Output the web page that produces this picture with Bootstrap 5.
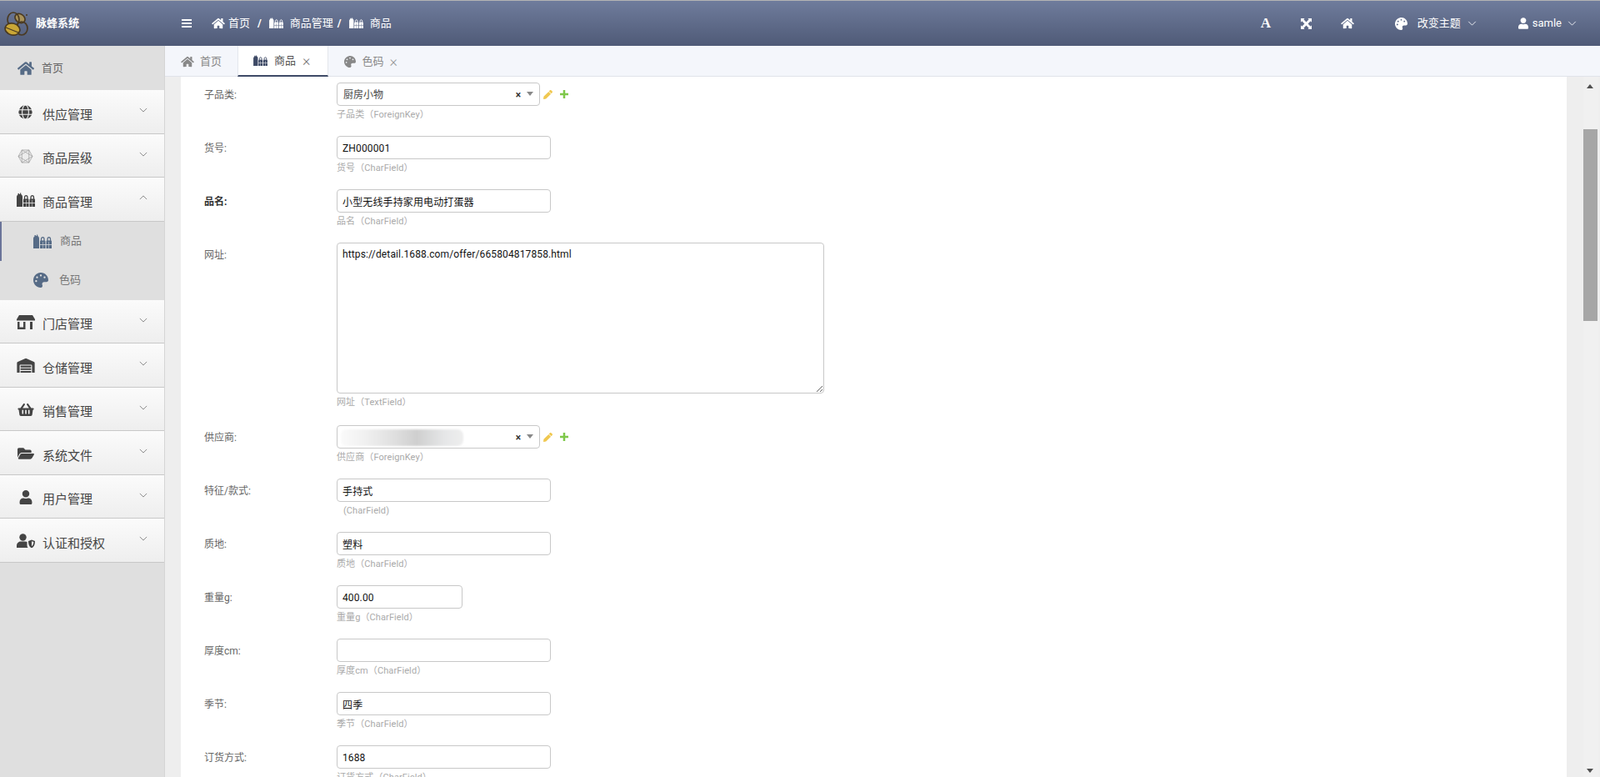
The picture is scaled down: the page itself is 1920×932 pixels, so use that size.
<!doctype html>
<html lang="zh"><head><meta charset="utf-8"><title>脉蜂系统</title>
<link href="https://cdn.jsdelivr.net/npm/bootstrap@5.3.0/dist/css/bootstrap.min.css" rel="stylesheet">
<style>
html,body{height:932px;overflow:hidden}
body{font-family:Roboto,"Noto Sans CJK SC",sans-serif;font-size:13px;color:#555;background:#eee}
.ic{fill:currentColor;display:inline-block;flex:none}
.topbar{height:55px;border-top:1px solid #b4b4b4;background:linear-gradient(#6f7c9c,#4f5a77);color:#fff}
.brand{width:198px;padding-left:5px}
.brand b{font-size:13px;margin-left:9px;font-weight:700}
.crumb{gap:4px;font-size:13px;margin-left:24px;margin-top:-1px}
.crumb i{font-style:normal;font-weight:700;margin:0 5px}
.crumb i.tight{margin-left:1px}
.tools{padding-right:28px}
.letter{font:700 17px "Liberation Serif",serif;width:12px}
.side{width:198px;background:#dfdfdf;border-right:1px solid #d5d5d5;flex:none}
.side-home{height:53px;color:#666;padding-left:21px;gap:9px;padding-top:1px}
.side-home svg{color:#566b86}
.side-item{height:52.5px;background:linear-gradient(#fbfbfb,#eeeeee);border-bottom:1px solid #c8c8c8;color:#444;font-size:15px;padding:8px 20px 0 19px}
.side-item .lab{margin-left:9px}
.side-item .ico{width:23px;display:flex;justify-content:center;margin-top:-6px}
.chev{margin-left:auto;margin-top:-11px;color:#777}
.sub{height:47px;padding-left:40px;gap:10px;color:#777}
.sub svg{color:#566b86}
.sub.on{border-left:2px solid #6b7499;padding-left:38px}
.sublab{margin-left:3px}
.tabs{height:37px;background:#f4f6fb;border-bottom:1px solid #e0e3ea;font-size:13px;color:#888}
.tabx{height:36px;padding:1px 19px 0;gap:7px}
.tabx.on{background:#fff;color:#555;border-bottom:2px solid #3e4a66;border-left:1px solid #e4e6ec;border-right:1px solid #e4e6ec;height:37px;padding:0 21px 0 18px}
.tabx.on .cl{color:#777;margin-left:1px}
.cl{font-size:18px;font-weight:300;color:#999;line-height:1}
.sheet{margin-left:19px;margin-right:40px;background:#fff;padding:7px 0 0 28px;height:840px;overflow:hidden}
.fld{height:64px;display:flex}
.fld.tall{height:219px}
.flab{width:159px;font-size:12px;color:#666;line-height:30px}
.flab.req{color:#333;font-weight:700}
.fhelp{font-size:11px;color:#aaa;line-height:14px;margin-top:4px;white-space:pre;letter-spacing:.1px}
.finp.form-control{width:257px;height:28px;min-height:0;border:1px solid #c8c8c8;border-radius:4px;padding:1px 6px 0;font-size:12px;letter-spacing:.13px;color:#111;box-shadow:none;font-family:inherit}
.finp.narrow{width:151px}
textarea.finp.form-control{width:585px;height:181px;padding:6px 6px;line-height:15px}
.fsel{width:244px;height:28px;border:1px solid #c8c8c8;border-radius:4px;font-size:12px;color:#444;padding:1px 7px 0;position:relative;background:#fff}
.clr{margin-left:auto;font-weight:700;color:#333;font-size:12px;line-height:1}
.car{width:0;height:0;border:4px solid transparent;border-top:5px solid #888;border-bottom:0;margin:-2px 0 0 7px}
.smudge{position:absolute;left:4px;top:4px;width:147px;height:20px;border-radius:7px;background:linear-gradient(90deg,#fafafa,#f0f0f0 20%,#dedede 45%,#cfcfcf 62%,#e6e7e8 85%,#eeeeee);filter:blur(1.2px)}
.acts{gap:9px;margin-left:4px;height:28px}
.track{position:absolute;top:92px;right:2px;bottom:0;width:18px;background:#f0f0f0}
.thumb{position:absolute;top:63px;left:0;right:1px;height:230px;background:#a6a6a6}
.ua,.da{position:absolute;left:4px;width:0;height:0;border:4.5px solid transparent}
.ua{top:9px;border-bottom:5px solid #505050;border-top:0}
.da{bottom:5px;border-top:5px solid #505050;border-bottom:0}
</style></head>
<body>
<svg width="0" height="0" class="position-absolute">
<symbol id="home" viewBox="0 0 576 512"><path d="M280.37 148.26L96 300.11V464a16 16 0 0 0 16 16l112.06-.29a16 16 0 0 0 15.92-16V368a16 16 0 0 1 16-16h64a16 16 0 0 1 16 16v95.64a16 16 0 0 0 16 16.05L464 480a16 16 0 0 0 16-16V300L295.67 148.26a12.19 12.19 0 0 0-15.3 0zM571.6 251.47L488 182.56V44.05a12 12 0 0 0-12-12h-56a12 12 0 0 0-12 12v72.61L318.47 43a48 48 0 0 0-61 0L4.34 251.47a12 12 0 0 0-1.6 16.9l25.5 31A12 12 0 0 0 45.15 301l235.22-193.74a12.19 12.19 0 0 1 15.3 0L530.9 301a12 12 0 0 0 16.9-1.6l25.5-31a12 12 0 0 0-1.7-16.93z"/></symbol>
<symbol id="pal" viewBox="0 0 512 512"><path d="M204.3 5C104.9 24.4 24.8 104.3 5.2 203.4c-37 187 131.7 326.4 258.8 306.7 41.2-6.4 61.4-54.6 42.5-91.7-23.1-45.4 9.9-98.4 60.9-98.4h79.7c35.8 0 64.8-29.6 64.9-65.3C511.5 97.1 368.1-26.9 204.3 5zM96 320c-17.7 0-32-14.3-32-32s14.3-32 32-32 32 14.3 32 32-14.3 32-32 32zm32-128c-17.7 0-32-14.3-32-32s14.3-32 32-32 32 14.3 32 32-14.3 32-32 32zm128-64c-17.7 0-32-14.3-32-32s14.3-32 32-32 32 14.3 32 32-14.3 32-32 32zm128 64c-17.7 0-32-14.3-32-32s14.3-32 32-32 32 14.3 32 32-14.3 32-32 32z"/></symbol>
<symbol id="user" viewBox="0 0 448 512"><path d="M224 256c70.7 0 128-57.3 128-128S294.7 0 224 0 96 57.3 96 128s57.3 128 128 128zm89.6 32h-16.7c-22.2 10.2-46.9 16-72.9 16s-50.6-5.8-72.9-16h-16.7C60.2 288 0 348.2 0 422.4V464c0 26.5 21.5 48 48 48h352c26.5 0 48-21.5 48-48v-41.6c0-74.2-60.2-134.4-134.4-134.4z"/></symbol>
<symbol id="open" viewBox="0 0 576 512"><path d="M572.694 292.093L500.27 416.248A63.997 63.997 0 0 1 444.989 448H45.025c-18.523 0-30.064-20.093-20.731-36.093l72.424-124.155A64 64 0 0 1 152 256h399.964c18.523 0 30.064 20.093 20.73 36.093zM152 224h328v-48c0-26.51-21.49-48-48-48H272l-64-64H48C21.49 64 0 85.49 0 112v278.046l69.077-118.418C86.214 242.25 117.989 224 152 224z"/></symbol>
<symbol id="basket" viewBox="0 0 576 512"><path d="M576 216v16c0 13.255-10.745 24-24 24h-8l-26.113 182.788C514.509 462.435 494.257 480 470.37 480H105.63c-23.887 0-44.139-17.565-47.518-41.212L32 256h-8c-13.255 0-24-10.745-24-24v-16c0-13.255 10.745-24 24-24h67.341l106.78-146.821c10.395-14.292 30.407-17.453 44.701-7.058 14.293 10.395 17.453 30.408 7.058 44.701L170.477 192h235.046L326.12 82.821c-10.395-14.292-7.234-34.306 7.059-44.701 14.291-10.395 34.306-7.235 44.701 7.058L484.659 192H552c13.255 0 24 10.745 24 24zM312 392V280c0-13.255-10.745-24-24-24s-24 10.745-24 24v112c0 13.255 10.745 24 24 24s24-10.745 24-24zm112 0V280c0-13.255-10.745-24-24-24s-24 10.745-24 24v112c0 13.255 10.745 24 24 24s24-10.745 24-24zm-224 0V280c0-13.255-10.745-24-24-24s-24 10.745-24 24v112c0 13.255 10.745 24 24 24s24-10.745 24-24z"/></symbol>
<symbol id="ware" viewBox="0 0 640 512"><path d="M504 352H136.4c-4.4 0-8 3.6-8 8l-.1 48c0 4.4 3.6 8 8 8H504c4.4 0 8-3.6 8-8v-48c0-4.4-3.6-8-8-8zm0 96H136.1c-4.4 0-8 3.6-8 8l-.1 48c0 4.4 3.6 8 8 8h368c4.4 0 8-3.6 8-8v-48c0-4.4-3.6-8-8-8zm0-192H136.6c-4.4 0-8 3.6-8 8l-.1 48c0 4.4 3.6 8 8 8H504c4.4 0 8-3.6 8-8v-48c0-4.4-3.6-8-8-8zm106.5-139L338.4 3.7a48.15 48.15 0 0 0-36.9 0L29.5 117C11.7 124.5 0 141.9 0 161.3V504c0 4.4 3.6 8 8 8h80c4.4 0 8-3.6 8-8V256c0-17.6 14.6-32 32.6-32h382.8c18 0 32.6 14.4 32.6 32v248c0 4.4 3.6 8 8 8h80c4.4 0 8-3.6 8-8V161.3c0-19.4-11.7-36.8-29.5-44.3z"/></symbol>
<symbol id="pencil" viewBox="0 0 512 512"><path d="M497.9 142.1l-46.1 46.1c-4.7 4.7-12.3 4.7-17 0l-111-111c-4.7-4.7-4.7-12.3 0-17l46.1-46.1c18.7-18.7 49.1-18.7 67.9 0l60.1 60.1c18.8 18.7 18.8 49.1 0 67.9zM284.2 99.8L21.6 362.4.4 483.9c-2.9 16.4 11.4 30.6 27.8 27.8l121.5-21.3 262.6-262.6c4.7-4.7 4.7-12.3 0-17l-111-111c-4.8-4.7-12.4-4.7-17.1 0z"/></symbol>
<symbol id="plus" viewBox="0 0 12 12"><path d="M4.500 0h3v4.500H12v3H7.500V12h-3V7.500H0v-3h4.500z"/></symbol>
<symbol id="globe" viewBox="0 0 24 24"><circle cx="12" cy="12" r="11.500"/><g fill="none" stroke="#f6f6f6" stroke-width="1.500"><path d="M0 8h24M0 16h24"/><ellipse cx="12" cy="12" rx="5.500" ry="12"/></g></symbol>
<symbol id="goods" viewBox="0 0 22 17"><path d="M0 17V5c0-1 .8-2 1.500-2.500V1H3v1h1V.5h1.200V2C6.200 2.500 7 3.500 7 5v12z"/><path d="M8 8.500c0-.5.500-1 1-1h4.500c.5 0 1 .5 1 1V12H11.500V9H11v3H8zM8 12.700h3V17H8zM11.500 12.700h3V17h-3zM15.500 8.500c0-.5.500-1 1-1H21c.5 0 1 .5 1 1V12h-3V9h-.5v3h-3zM15.500 12.700h3V17h-3zM19 12.700h3V17h-3z"/><path d="M9.500 8V6c0-3.200 3.500-3.200 3.500 0v2M17 8V6c0-3.200 3.500-3.200 3.500 0v2" fill="none" stroke="currentColor" stroke-width="1.300"/></symbol>
<symbol id="store" viewBox="0 0 22 17"><path d="M3 0h16l3 5v1.500H0V5z"/><path d="M1 8h2.500v6.500H8V8h2.500v9H1zM16 8h3v9h-3z"/></symbol>
<symbol id="hex" viewBox="0 0 20 18"><path d="M5.500 1h9L19 9l-4.500 8h-9L1 9z" fill="#ececec"/><g fill="none" stroke="currentColor" stroke-width=".7"><path d="M5.500 1h9L19 9l-4.500 8h-9L1 9z"/><path d="M1 9 14.500 1M1 9l13.500 8M19 9 5.500 1M19 9 5.500 17M5.500 1v16M14.500 1v16"/></g></symbol>
<symbol id="ushield" viewBox="0 0 22 17"><circle cx="7.500" cy="4.500" r="4.200"/><path d="M0 17v-2.500C0 11.500 2.500 9.500 5 9.500h5c1.200 0 2 .3 2.500.6V14c0 1.300.5 2.300 1.200 3z"/><path fill-rule="evenodd" d="M18 7.500 22 9c0 4-1 7-4 8.500C15 16 14 13 14 9zM18 9.300V15.300c1.500-1.100 2.300-3 2.400-5.200z"/></symbol>
<symbol id="exp" viewBox="0 0 14 14"><path d="M0 0h5L3.600 1.400 7 4.800 10.400 1.400 9 0h5v5l-1.400-1.400L9.200 7l3.400 3.400L14 9v5H9l1.400-1.400L7 9.200l-3.400 3.400L5 14H0V9l1.400 1.400L4.800 7 1.400 3.600 0 5z"/></symbol>
<symbol id="chevd" viewBox="0 0 12 7"><path d="M1 1l5 5 5-5" fill="none" stroke="currentColor" stroke-width="1"/></symbol>
<symbol id="chevu" viewBox="0 0 12 7"><path d="M1 6l5-5 5 5" fill="none" stroke="currentColor" stroke-width="1"/></symbol>
</svg>

<header class="topbar d-flex align-items-center">
  <div class="brand d-flex align-items-center">
    <svg width="29" height="29" viewBox="0 0 29 29"><g stroke="#4a3a22" stroke-width="1.700" fill="none"><ellipse cx="19" cy="8" rx="6.500" ry="5" fill="#a8925a" transform="rotate(35 19 8)"/><ellipse cx="11" cy="9.500" rx="7" ry="8.500"/><ellipse cx="21" cy="20" rx="7" ry="8"/><ellipse cx="10" cy="21" rx="9" ry="7" fill="#c9a636" transform="rotate(15 10 21)"/><path d="M2 19 17 25" stroke-width="1.200"/></g><circle cx="27" cy="4" r="1" fill="#4a3a22"/></svg>
    <b>脉蜂系统</b>
  </div>
  <svg width="12" height="10" viewBox="0 0 12 10" style="margin-left:20px" fill="#fff"><path d="M0 0h12v2H0zM0 4h12v2H0zM0 8h12v2H0z"/></svg>
  <div class="crumb d-flex align-items-center">
    <svg class="ic" width="16" height="14"><use href="#home"/></svg><span>首页</span><i>/</i>
    <svg class="ic" width="17" height="13"><use href="#goods"/></svg><span class="ms-1">商品管理</span><i class="tight">/</i>
    <svg class="ic" width="17" height="13"><use href="#goods"/></svg><span class="ms-1">商品</span>
  </div>
  <div class="tools ms-auto d-flex align-items-center">
    <span class="letter">A</span>
    <svg class="ic" style="margin-left:36px" width="13" height="13"><use href="#exp"/></svg>
    <svg class="ic" style="margin-left:35px" width="16" height="14"><use href="#home"/></svg>
    <svg class="ic" style="margin-left:49px" width="15" height="15"><use href="#pal"/></svg>
    <span style="margin-left:12px">改变主题</span>
    <svg style="margin-left:8px" width="11" height="6"><use href="#chevd"/></svg>
    <svg class="ic" style="margin-left:50px" width="12" height="14"><use href="#user"/></svg>
    <span style="margin-left:5px">samle</span>
    <svg style="margin-left:7px" width="11" height="6"><use href="#chevd"/></svg>
  </div>
</header>

<div class="d-flex" style="height:877px">
  <nav class="side">
    <div class="side-home d-flex align-items-center"><svg class="ic" width="20" height="18"><use href="#home"/></svg><span>首页</span></div>
    <div class="side-item d-flex align-items-center"><span class="ico"><svg class="ic" width="17" height="17"><use href="#globe"/></svg></span><span class="lab">供应管理</span><svg class="chev" width="10" height="6"><use href="#chevd"/></svg></div>
    <div class="side-item d-flex align-items-center"><span class="ico"><svg class="ic" width="19" height="17" style="color:#999"><use href="#hex"/></svg></span><span class="lab">商品层级</span><svg class="chev" width="10" height="6"><use href="#chevd"/></svg></div>
    <div class="side-item d-flex align-items-center"><span class="ico"><svg class="ic" width="22" height="17"><use href="#goods"/></svg></span><span class="lab">商品管理</span><svg class="chev" width="10" height="6"><use href="#chevu"/></svg></div>
    <div class="sub on d-flex align-items-center"><svg class="ic" width="22" height="17"><use href="#goods"/></svg><span>商品</span></div>
    <div class="sub d-flex align-items-center"><svg class="ic" width="18" height="18"><use href="#pal"/></svg><span class="sublab">色码</span></div>
    <div class="side-item d-flex align-items-center"><span class="ico"><svg class="ic" width="22" height="17"><use href="#store"/></svg></span><span class="lab">门店管理</span><svg class="chev" width="10" height="6"><use href="#chevd"/></svg></div>
    <div class="side-item d-flex align-items-center"><span class="ico"><svg class="ic" width="22" height="17"><use href="#ware"/></svg></span><span class="lab">仓储管理</span><svg class="chev" width="10" height="6"><use href="#chevd"/></svg></div>
    <div class="side-item d-flex align-items-center"><span class="ico"><svg class="ic" width="20" height="17"><use href="#basket"/></svg></span><span class="lab">销售管理</span><svg class="chev" width="10" height="6"><use href="#chevd"/></svg></div>
    <div class="side-item d-flex align-items-center"><span class="ico"><svg class="ic" width="20" height="18"><use href="#open"/></svg></span><span class="lab">系统文件</span><svg class="chev" width="10" height="6"><use href="#chevd"/></svg></div>
    <div class="side-item d-flex align-items-center"><span class="ico"><svg class="ic" width="16" height="17"><use href="#user"/></svg></span><span class="lab">用户管理</span><svg class="chev" width="10" height="6"><use href="#chevd"/></svg></div>
    <div class="side-item d-flex align-items-center"><span class="ico"><svg class="ic" width="22" height="17"><use href="#ushield"/></svg></span><span class="lab">认证和授权</span><svg class="chev" width="10" height="6"><use href="#chevd"/></svg></div>
  </nav>

  <main class="flex-grow-1 position-relative overflow-hidden">
    <div class="tabs d-flex">
      <div class="tabx d-flex align-items-center"><svg class="ic" width="16" height="14"><use href="#home"/></svg><span>首页</span></div>
      <div class="tabx on d-flex align-items-center"><svg class="ic" width="17" height="13" style="color:#3e4a66"><use href="#goods"/></svg><span style="margin-left:1px">商品</span><span class="cl">×</span></div>
      <div class="tabx d-flex align-items-center"><svg class="ic" width="14" height="14"><use href="#pal"/></svg><span>色码</span><span class="cl">×</span></div>
    </div>
    <div class="sheet">
      <div class="fld"><div class="flab">子品类:</div><div><div class="d-flex align-items-start"><div class="fsel d-flex align-items-center"><span>厨房小物</span><span class="clr">×</span><span class="car"></span></div><div class="acts d-flex align-items-center"><svg class="ic" width="11" height="11" style="color:#f0c850"><use href="#pencil"/></svg><svg class="ic" width="10" height="10" style="color:#7ec84a"><use href="#plus"/></svg></div></div><div class="fhelp">子品类（ForeignKey）</div></div></div>
      <div class="fld"><div class="flab">货号:</div><div><input class="form-control finp" value="ZH000001"><div class="fhelp">货号（CharField）</div></div></div>
      <div class="fld"><div class="flab req">品名:</div><div><input class="form-control finp" value="小型无线手持家用电动打蛋器"><div class="fhelp">品名（CharField）</div></div></div>
      <div class="fld tall"><div class="flab">网址:</div><div><textarea class="form-control finp">https://detail.1688.com/offer/665804817858.html</textarea><div class="fhelp">网址（TextField）</div></div></div>
      <div class="fld"><div class="flab">供应商:</div><div><div class="d-flex align-items-start"><div class="fsel d-flex align-items-center"><span class="smudge"></span><span class="clr">×</span><span class="car"></span></div><div class="acts d-flex align-items-center"><svg class="ic" width="11" height="11" style="color:#f0c850"><use href="#pencil"/></svg><svg class="ic" width="10" height="10" style="color:#7ec84a"><use href="#plus"/></svg></div></div><div class="fhelp">供应商（ForeignKey）</div></div></div>
      <div class="fld"><div class="flab">特征/款式:</div><div><input class="form-control finp" value="手持式"><div class="fhelp ps-2">(CharField)</div></div></div>
      <div class="fld"><div class="flab">质地:</div><div><input class="form-control finp" value="塑料"><div class="fhelp">质地（CharField）</div></div></div>
      <div class="fld"><div class="flab">重量g:</div><div><input class="form-control finp narrow" value="400.00"><div class="fhelp">重量g（CharField）</div></div></div>
      <div class="fld"><div class="flab">厚度cm:</div><div><input class="form-control finp" value=""><div class="fhelp">厚度cm（CharField）</div></div></div>
      <div class="fld"><div class="flab">季节:</div><div><input class="form-control finp" value="四季"><div class="fhelp">季节（CharField）</div></div></div>
      <div class="fld"><div class="flab">订货方式:</div><div><input class="form-control finp" value="1688"><div class="fhelp">订货方式（CharField）</div></div></div>
    </div>
  </main>
</div>
<div class="track"><span class="ua"></span><div class="thumb"></div><span class="da"></span></div>
</body></html>
